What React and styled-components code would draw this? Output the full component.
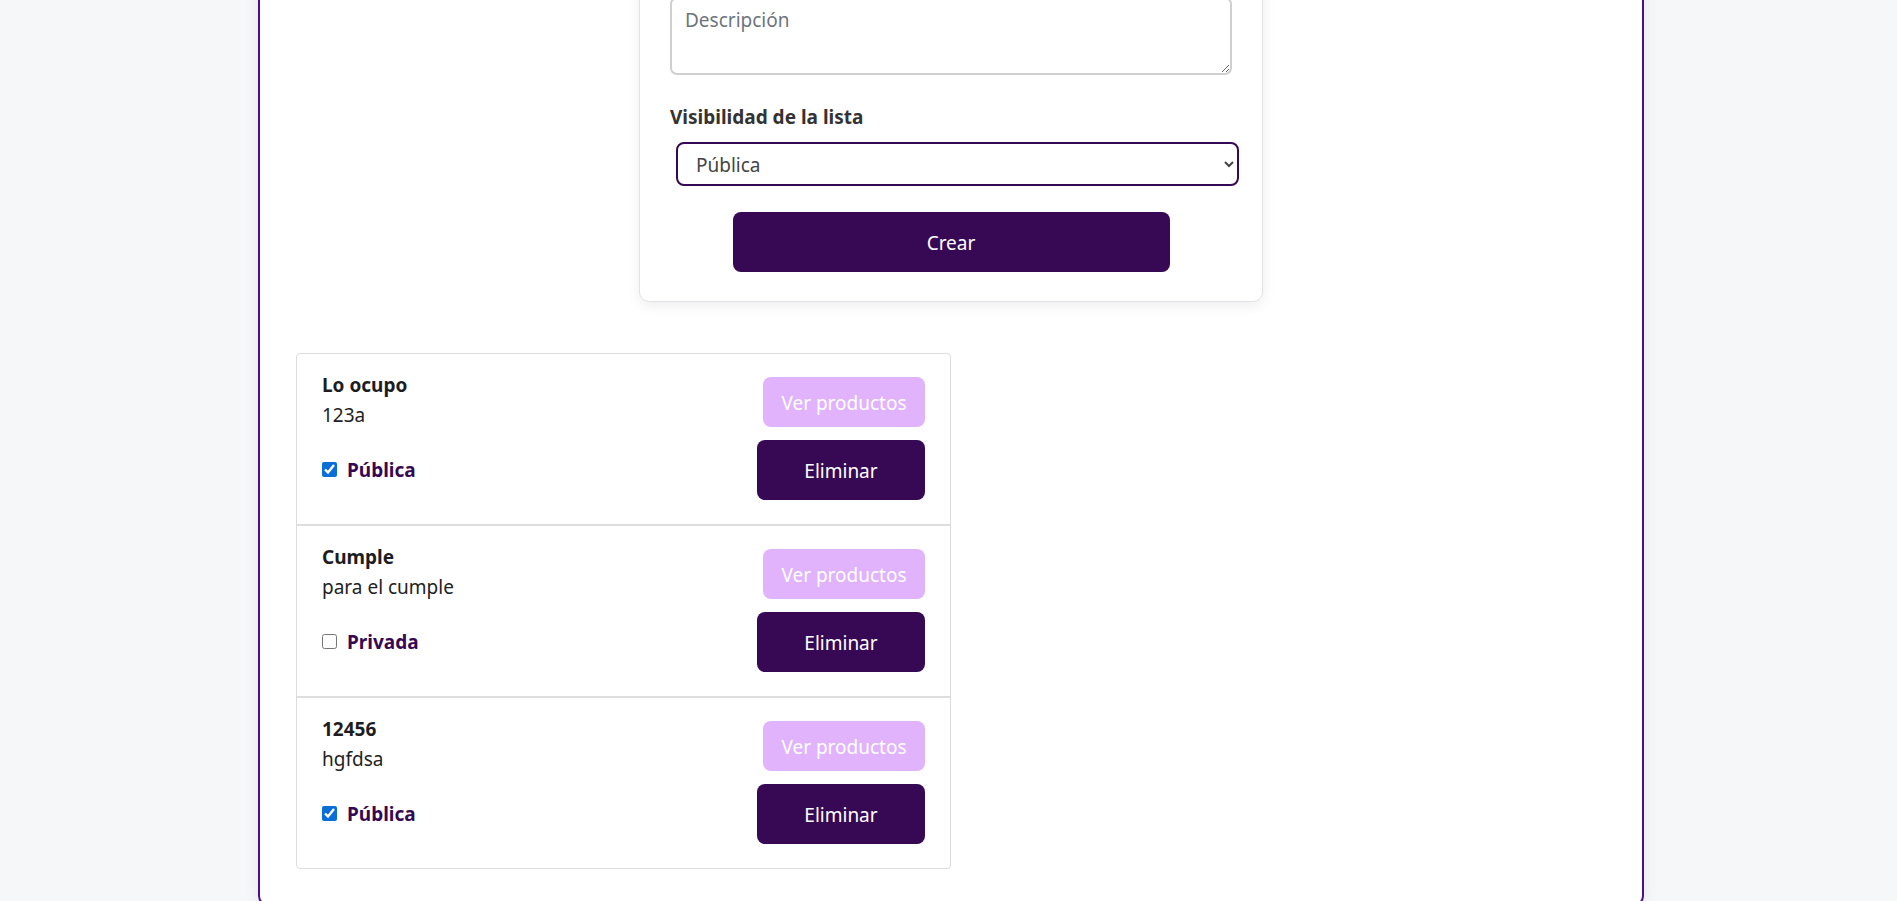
import React from "react";
import styled, { createGlobalStyle } from "styled-components";

const Global = createGlobalStyle`
  html, body { margin: 0; padding: 0; overflow: hidden; }
  body {
    background: #f6f7f9;
    font-family: "Segoe UI", "Noto Sans", "Open Sans", sans-serif;
    font-size: 19px;
    color: #212529;
  }
  * { box-sizing: border-box; }
`;

const Frame = styled.main`
  width: 1386px;
  margin: -72px 0 0 258px;
  padding: 36px 36px 35px;
  background: #ffffff;
  border: 2px solid #4b0e8c;
  border-radius: 10px;
  box-shadow: 0 0 16px rgba(0, 0, 0, 0.07);
  display: flex;
  flex-direction: column;
  gap: 51px;
`;

const FormCard = styled.form`
  align-self: center;
  width: 624px;
  padding: 30px 30px 29px;
  background: #fff;
  border: 1px solid #e2e2e6;
  border-radius: 10px;
  box-shadow: 0 4px 14px rgba(0, 0, 0, 0.07);
  display: flex;
  flex-direction: column;
`;

const TextArea = styled.textarea`
  display: block;
  width: 100%;
  height: 78px;
  padding: 7px 13px 5px;
  border: 2px solid #cfcfcf;
  border-radius: 7px;
  font: inherit;
  line-height: 1.5;
  color: #333;
  resize: vertical;
  &::placeholder { color: #6c757d; }
`;

const FieldLabel = styled.label`
  margin-top: 28px;
  font-weight: 700;
  line-height: 28.8px;
  color: #333;
`;

const Select = styled.select`
  width: 563px;
  height: 44px;
  margin: 10px 0 0 6px;
  padding: 2px 10px 0 14px;
  border: 2px solid #370954;
  border-radius: 8px;
  background: #fff;
  font: inherit;
  color: #444;
`;

const Button = styled.button`
  border: none;
  border-radius: 8px;
  padding: 2px 0 0;
  font: inherit;
  color: #fff;
  cursor: pointer;
  width: ${(p) => p.$w}px;
  height: ${(p) => p.$h}px;
  background: ${(p) => (p.$light ? "#e0b3fc" : "#370954")};
`;

const CreateButton = styled(Button)`
  align-self: center;
  margin-top: 26px;
`;

const ListBox = styled.ul`
  list-style: none;
  margin: 0;
  padding: 0;
  width: 655px;
  border: 1px solid #dcdcdc;
  border-radius: 4px;
`;

const Item = styled.li`
  display: flex;
  justify-content: space-between;
  align-items: flex-start;
  height: ${(p) => (p.$first ? 170 : 172)}px;
  padding: 16px 25px 0 25px;
  border-top: ${(p) => (p.$first ? "none" : "2px solid #dedede")};
`;

const Info = styled.div`
  display: flex;
  flex-direction: column;
  line-height: 30px;
`;

const Title = styled.strong`
  font-weight: 700;
  color: #1d1d1f;
`;

const Desc = styled.span`
  color: #222;
`;

const VisRow = styled.label`
  margin-top: 25px;
  font-weight: 700;
  color: #370954;
`;

const Check = styled.input`
  width: 15px;
  height: 15px;
  margin: 3px 10px 5px 0;
  accent-color: #0b6ed8;
  vertical-align: baseline;
`;

const Actions = styled.div`
  margin-top: 7px;
  display: flex;
  flex-direction: column;
  align-items: flex-end;
  gap: 13px;
`;

const lists = [
  { name: "Lo ocupo", desc: "123a", pub: true },
  { name: "Cumple", desc: "para el cumple", pub: false },
  { name: "12456", desc: "hgfdsa", pub: true },
];

export default function App() {
  return (
    <>
      <Global />
      <Frame>
        <FormCard onSubmit={(e) => e.preventDefault()}>
          <TextArea placeholder="Descripción" />
          <FieldLabel htmlFor="vis">Visibilidad de la lista</FieldLabel>
          <Select id="vis" defaultValue="publica">
            <option value="publica">Pública</option>
            <option value="privada">Privada</option>
          </Select>
          <CreateButton type="submit" $w={437} $h={60}>
            Crear
          </CreateButton>
        </FormCard>
        <ListBox>
          {lists.map((l, i) => (
            <Item key={l.name} $first={i === 0}>
              <Info>
                <Title>{l.name}</Title>
                <Desc>{l.desc}</Desc>
                <VisRow>
                  <Check type="checkbox" defaultChecked={l.pub} />
                  {l.pub ? "Pública" : "Privada"}
                </VisRow>
              </Info>
              <Actions>
                <Button type="button" $light $w={162} $h={50}>
                  Ver productos
                </Button>
                <Button type="button" $w={168} $h={60}>
                  Eliminar
                </Button>
              </Actions>
            </Item>
          ))}
        </ListBox>
      </Frame>
    </>
  );
}
